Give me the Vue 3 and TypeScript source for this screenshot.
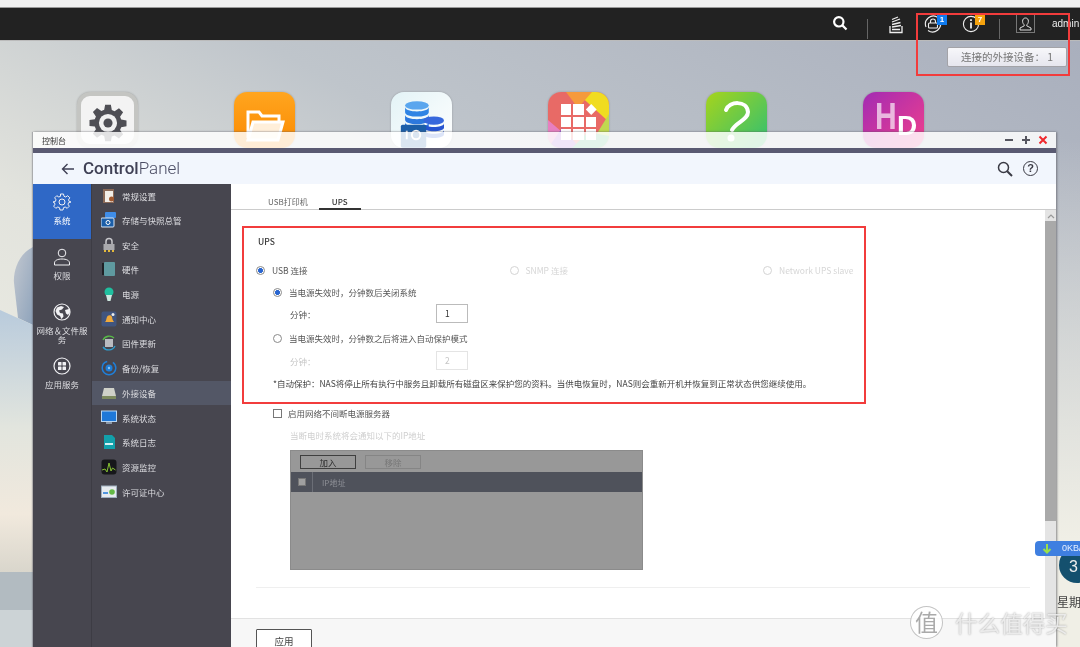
<template>
  <div class="desktop">
    <svg class="wallpaper" width="1080" height="607" viewBox="0 0 1080 607">
      <defs>
        <linearGradient id="sky" x1="0" y1="1" x2="1" y2="0">
          <stop offset="0" stop-color="#f4f3e8" />
          <stop offset="0.38" stop-color="#e2e3dd" />
          <stop offset="0.62" stop-color="#bfc5cb" />
          <stop offset="1" stop-color="#a9afbd" />
        </linearGradient>
        <linearGradient id="hill" x1="0" y1="0" x2="0" y2="1">
          <stop offset="0" stop-color="#b9cbdc" />
          <stop offset="0.45" stop-color="#e2e5de" />
          <stop offset="0.78" stop-color="#f1e9dd" />
          <stop offset="1" stop-color="#d9d6cc" />
        </linearGradient>
        <linearGradient id="rock" x1="0" y1="0" x2="1" y2="1">
          <stop offset="0" stop-color="#c3c8d0" />
          <stop offset="1" stop-color="#8ea3bb" />
        </linearGradient>
        <linearGradient id="rightFade" x1="0" y1="0" x2="0" y2="1">
          <stop offset="0" stop-color="#f0efe6" stop-opacity="0" />
          <stop offset="1" stop-color="#f0efe6" />
        </linearGradient>
      </defs>
      <rect width="1080" height="607" fill="url(#sky)" />
      <rect x="1056" y="100" width="24" height="400" fill="url(#rightFade)" />
      <rect x="1056" y="500" width="24" height="107" fill="#f0efe6" />
      <path d="M33 207 C18 214 13 232 14 243 L18 278 L33 285 Z" fill="url(#rock)" />
      <path d="M0 270 L33 285 V532 H0 Z" fill="url(#hill)" />
      <rect y="532" width="33" height="38" fill="#b2bbc1" />
      <rect y="570" width="33" height="37" fill="#ccd3d6" />
    </svg>

    <div class="top-strip"></div>
    <header class="topbar">
      <svg class="tb-icon" width="16" height="16" viewBox="0 0 16 16" fill="none" stroke="#fff" stroke-width="2.2">
        <circle cx="6.8" cy="6.8" r="4.7" /><path d="M10.4 10.4 14.500 14.500" />
      </svg>
      <span class="tb-sep"></span>
      <svg class="tb-icon stack" width="16" height="18" viewBox="0 0 16 18" fill="none" stroke="#eee" stroke-width="1.3">
        <path d="M2 10v6.500h12V10M4 13.500h8M4 11l9-1.500M4 8.500l8.500-2M4 6l8-3M4 3.500 10 1" />
      </svg>
      <span class="tb-wrap lock">
        <svg width="18" height="18" viewBox="0 0 18 18" fill="none" stroke="#eee" stroke-width="1.1">
          <path d="M2 12A8 8 0 0 1 14 2.500M16 6A8 8 0 0 1 4 15.500" />
          <rect x="4.500" y="8" width="9" height="5" rx="1" /><path d="M6.500 8V6.500a2.500 2.500 0 0 1 5 0V8" />
        </svg>
        <b class="badge blue">1</b>
      </span>
      <span class="tb-wrap info">
        <svg width="18" height="18" viewBox="0 0 18 18" fill="none" stroke="#eee" stroke-width="1.1">
          <circle cx="9" cy="9" r="7.600" /><path d="M9 7.500v6" stroke-width="1.800" /><path d="M9 4.200v1.800" stroke-width="1.800" />
        </svg>
        <b class="badge orange">7</b>
      </span>
      <span class="tb-sep second"></span>
      <span class="user-box">
        <svg width="13" height="14" viewBox="0 0 13 14" fill="none" stroke="#ddd" stroke-width="1">
          <path d="M6.500 1C4.600 1 3.600 2.400 3.600 4.200c0 1.600.7 2.900 1.600 3.600v1.100L1 11v2h11v-2L7.800 8.900V7.800c.9-.7 1.600-2 1.600-3.600C9.400 2.400 8.400 1 6.500 1Z" />
        </svg>
      </span>
      <span class="admin">admin</span>
    </header>

    <button class="device-pill">连接的外接设备： 1</button>

    <div class="app-icon gear" style="left: 77px">
      <svg width="38" height="38" viewBox="-1 -1 46 46">
        <path fill="#4f4f55" d="M18.500 0h7l1.100 6.400 3.400 1.400 5.300-3.700 5 5-3.700 5.300 1.400 3.400 6.400 1.100v7l-6.400 1.100-1.400 3.400 3.700 5.300-5 5-5.300-3.700-3.400 1.400L25.500 44h-7l-1.100-6.400-3.400-1.400-5.300 3.700-5-5 3.700-5.300-1.400-3.400L-.4 25.500v-7L6 17.400l1.400-3.400L3.700 8.700l5-5 5.300 3.700 3.400-1.400Z" />
        <circle cx="22" cy="22" r="11" fill="#f1f1f1" /><circle cx="22" cy="22" r="5.500" fill="#4f4f55" />
      </svg>
    </div>
    <div class="app-icon folder" style="left: 234px">
      <svg width="40" height="36" viewBox="0 0 40 36" fill="none" stroke="#fff" stroke-width="3">
        <path d="M3 30V4h11l3 4h17v5" /><path d="M8 14h30l-5 18H3Z" fill="#fff" fill-opacity=".85" />
      </svg>
    </div>
    <div class="app-icon snap" style="left: 391px">
      <svg width="44" height="48" viewBox="0 0 52 56">
        <ellipse cx="20" cy="6" rx="14" ry="5" fill="#5aa6ee" />
        <path d="M6 8c0 7 28 7 28 0v6c0 7-28 7-28 0Z" fill="#2f84e4" />
        <path d="M6 17c0 7 28 7 28 0v6c0 7-28 7-28 0Z" fill="#2c78dd" />
        <path d="M6 26c0 7 28 7 28 0v6H6Z" fill="#2c6fdb" />
        <ellipse cx="40" cy="24" rx="12" ry="5" fill="#3768dc" />
        <path d="M28 27c0 6 24 6 24 0v5c0 6-24 6-24 0Z" fill="#2654d0" />
        <path d="M28 35c0 6 24 6 24 0v5c0 6-24 6-24 0Z" fill="#2a5ad4" />
        <rect x="1" y="29" width="30" height="27" rx="2" fill="#1b5ea8" />
        <circle cx="19" cy="41" r="5" fill="none" stroke="#fff" stroke-width="2.200" /><path d="M8 36v10" stroke="#fff" stroke-width="2.200" />
      </svg>
    </div>
    <div class="app-icon store" style="left: 548px">
      <svg class="store-bg" width="61" height="56" viewBox="0 0 61 56">
        <rect width="61" height="56" fill="#e86a66" />
        <path d="M28 0H61V30Z" fill="#f0dc20" />
        <path d="M18 0H44L30 16Z" fill="#f59a3c" />
        <path d="M0 28 14 40 0 56Z" fill="#e77fc0" />
        <path d="M0 56 14 36 32 56Z" fill="#a060d0" />
        <path d="M61 22V56H40Z" fill="#c0d850" />
        <path d="M61 44V56H24L40 40Z" fill="#50b880" />
      </svg>
      <div class="store-grid"><i v-for="n in 9" :key="n" :class="{ diamond: n === 3 }"></i></div>
    </div>
    <div class="app-icon helpapp" style="left: 706px">
      <svg width="61" height="56" viewBox="0 0 61 56" fill="none" stroke="#fff" stroke-width="4" stroke-linecap="round">
        <path d="M20 18C23 9 41 8 42 20C42 28 30 30 26 38" />
        <circle cx="25" cy="46" r="3.500" fill="#fff" stroke="none" />
      </svg>
    </div>
    <div class="app-icon hd" style="left: 863px">
      <span class="h">H</span><span class="d">D</span>
    </div>

    <section class="window">
      <div class="titlebar">
        <span class="title">控制台</span>
        <span class="win-ctrl">
          <svg width="10" height="10" viewBox="0 0 10 10"><path d="M1 5h8" stroke="#55555f" stroke-width="2" /></svg>
          <svg width="10" height="10" viewBox="0 0 10 10"><path d="M1 5h8M5 1v8" stroke="#55555f" stroke-width="2" /></svg>
          <svg width="10" height="10" viewBox="0 0 10 10"><path d="M1.500 1.500l7 7M8.500 1.500l-7 7" stroke="#f0282d" stroke-width="2" /></svg>
        </span>
      </div>
      <div class="stripe"></div>
      <div class="app-header">
        <svg class="back" width="14" height="12" viewBox="0 0 14 12" fill="none" stroke="#3f4055" stroke-width="1.400">
          <path d="M13 6H1.500M6.500 1 1.500 6l5 5" />
        </svg>
        <span class="brand"><b>Control</b>Panel</span>
        <svg class="hd-search" width="16" height="16" viewBox="0 0 16 16" fill="none" stroke="#3a3a44" stroke-width="1.500">
          <circle cx="6.500" cy="6.500" r="5" /><path d="M10.200 10.200 15 15" stroke-width="2" />
        </svg>
        <span class="hd-help">?</span>
      </div>

      <div class="body">
        <nav class="nav-main">
          <div v-for="item in mainNav" :key="item.label" class="main-item" :class="{ active: item.active }">
            <svg width="18" height="18" viewBox="0 0 18 18" fill="none" stroke="#f1f1f4" stroke-width="1">
              <g v-if="item.icon === 'gear'">
                <path d="M7.500 1h3l.5 2.300 1.700.7 2-1.300 2.100 2.100-1.300 2 .7 1.700L18 9l-2.300.5-.7 1.700 1.300 2-2.100 2.100-2-1.300-1.700.7-.5 2.300h-3l-.5-2.300-1.700-.7-2 1.300-2.100-2.100 1.300-2-.7-1.700L0 9l2.300-.5.7-1.700-1.300-2 2.100-2.100 2 1.300 1.700-.7Z" />
                <circle cx="9" cy="9" r="3" />
              </g>
              <g v-else-if="item.icon === 'user'">
                <circle cx="9" cy="5" r="3.800" />
                <path d="M1.500 17v-2c0-2.500 3-4 7.500-4s7.500 1.500 7.500 4v2Z" />
              </g>
              <g v-else-if="item.icon === 'globe'">
                <circle cx="9" cy="9" r="8" stroke-width="1.200" />
                <path d="M4 4.500l4-1.500 3 1-2 2.500-3 1 1 2.500 3 .5.5 3-2 2.500-1.500-3-3-1.500-1.500-3.500ZM12 7l4-1 1 3-2 3-2-1.500Z" fill="#f1f1f4" stroke="none" />
              </g>
              <g v-else>
                <circle cx="9" cy="9" r="8" stroke-width="1.200" />
                <rect x="5" y="5" width="3.500" height="3.500" rx=".6" fill="#f1f1f4" stroke="none" />
                <rect x="9.500" y="5" width="3.500" height="3.500" rx=".6" fill="#f1f1f4" stroke="none" />
                <rect x="5" y="9.500" width="3.500" height="3.500" rx=".6" fill="#f1f1f4" stroke="none" />
                <rect x="9.500" y="9.500" width="3.500" height="3.500" rx=".6" fill="#f1f1f4" stroke="none" />
              </g>
            </svg>
            <span>{{ item.label }}</span>
          </div>
        </nav>

        <nav class="nav-sub">
          <div v-for="item in subNav" :key="item.label" class="sub-item" :class="{ active: item.active }">
            <span class="sub-icon" v-html="item.svg"></span>
            <span>{{ item.label }}</span>
          </div>
        </nav>

        <main class="content">
          <div class="tabs">
            <span class="tab">USB打印机</span>
            <span class="tab on">UPS</span>
          </div>

          <div class="scroll-area">
            <div class="form">
              <h3>UPS</h3>
              <div class="conn-row">
                <label class="radio-line"><i class="radio checked"></i>USB 连接</label>
                <label class="radio-line off"><i class="radio"></i>SNMP 连接</label>
                <label class="radio-line off"><i class="radio"></i>Network UPS slave</label>
              </div>

              <label class="radio-line sub first"><i class="radio checked"></i>当电源失效时，分钟数后关闭系统</label>
              <div class="minute-row">
                <span>分钟：</span>
                <span class="num-input">1</span>
              </div>
              <label class="radio-line sub"><i class="radio"></i>当电源失效时，分钟数之后将进入自动保护模式</label>
              <div class="minute-row off">
                <span>分钟：</span>
                <span class="num-input">2</span>
              </div>
              <p class="note">*自动保护：NAS将停止所有执行中服务且卸载所有磁盘区来保护您的资料。当供电恢复时，NAS则会重新开机并恢复到正常状态供您继续使用。</p>

              <label class="check-line"><i class="check"></i>启用网络不间断电源服务器</label>
              <p class="hint">当断电时系统将会通知以下的IP地址</p>

              <div class="ip-table">
                <div class="ip-tools">
                  <span class="ip-btn">加入</span>
                  <span class="ip-btn dim">移除</span>
                </div>
                <div class="ip-head">
                  <span class="ip-check"><i></i></span>
                  <span>IP地址</span>
                </div>
              </div>

              <div class="divider"></div>
            </div>
            <div class="scrollbar">
              <svg width="8" height="6" viewBox="0 0 8 6" fill="none" stroke="#999" stroke-width="1.200"><path d="M1 5l3-3 3 3" /></svg>
              <span class="thumb"></span>
            </div>
          </div>

          <footer class="footer">
            <button class="apply">应用</button>
          </footer>
        </main>
      </div>
    </section>

    <div class="widget-clock"><span>3</span></div>
    <div class="net-badge">
      <svg width="10" height="10" viewBox="0 0 10 10" fill="none" stroke="#9be04a" stroke-width="2"><path d="M5 0v8M1.500 5 5 8.500 8.500 5" /></svg>
      <span>0KB/s</span>
    </div>
    <div class="weekday">星期</div>

    <div class="mark box-a"></div>
    <div class="mark box-b"></div>

    <div class="watermark">
      <span class="wm-circle">值</span>
      <span class="wm-text">什么值得买</span>
    </div>
  </div>
</template>

<script setup lang="ts">
interface MainItem {
  label: string;
  icon: string;
  active?: boolean;
}

interface SubItem {
  label: string;
  svg: string;
  active?: boolean;
}

const wrap = (inner: string) =>
  `<svg width="16" height="16" viewBox="0 0 16 16">${inner}</svg>`;

const mainNav: MainItem[] = [
  { label: "系统", icon: "gear", active: true },
  { label: "权限", icon: "user" },
  { label: "网络＆文件服务", icon: "globe" },
  { label: "应用服务", icon: "apps" },
];

const subNav: SubItem[] = [
  {
    label: "常规设置",
    svg: wrap('<rect x="2" y="1" width="11" height="14" fill="#8b6a58"/><rect x="4" y="3" width="8" height="11" fill="#f2eee8"/><circle cx="10.500" cy="11" r="2.500" fill="#a25a30"/>'),
  },
  {
    label: "存储与快照总管",
    svg: wrap('<rect x="4" y="0" width="11" height="6" rx="1" fill="#3f8de8"/><rect x="0" y="6" width="13" height="9" rx="1" fill="#1b5ea8" stroke="#dbe8f7"/><circle cx="7" cy="10.500" r="2" fill="none" stroke="#fff"/>'),
  },
  {
    label: "安全",
    svg: wrap('<path d="M5 7V4.500a3 3 0 0 1 6 0V7" fill="none" stroke="#c8c8cc" stroke-width="1.500"/><rect x="2.500" y="7" width="11" height="6" fill="#a9a9ad"/><path d="M3 14h2M7 14h2M11 14h2" stroke="#e3b93c" stroke-width="2"/>'),
  },
  {
    label: "硬件",
    svg: wrap('<rect x="1" y="2" width="3" height="12" fill="#1f2025"/><rect x="3" y="1" width="11" height="14" rx="1" fill="#5f9aa0"/>'),
  },
  {
    label: "电源",
    svg: wrap('<circle cx="8" cy="6" r="4.500" fill="#1fbf9f"/><path d="M5 9h6l-1.500 6h-3Z" fill="#cfe8e0"/>'),
  },
  {
    label: "通知中心",
    svg: wrap('<rect x="0.500" y="0.500" width="15" height="15" rx="2" fill="#41557f"/><path d="M4 11c1.500-1 1-4 2.500-6 1.500-1.500 4-1 4.500 1 .5 2 .5 3.500 2 5Z" fill="#f0a93a"/><circle cx="12" cy="3.500" r="1.500" fill="#eee"/>'),
  },
  {
    label: "固件更新",
    svg: wrap('<path d="M2 5a7 7 0 0 1 11-2" fill="none" stroke="#58b947" stroke-width="1.300"/><path d="M14 11a7 7 0 0 1-12 1" fill="none" stroke="#2f9fd0" stroke-width="1.300"/><rect x="4" y="4" width="8" height="8" fill="#b9bbc0"/>'),
  },
  {
    label: "备份/恢复",
    svg: wrap('<circle cx="8" cy="8" r="6.800" fill="none" stroke="#1f7fd9" stroke-width="1.500" stroke-dasharray="30 6"/><circle cx="8" cy="8" r="3.500" fill="#1f7fd9"/><circle cx="8" cy="8" r="1.200" fill="#8fc4f2"/>'),
  },
  {
    label: "外接设备",
    svg: wrap('<path d="M3 3h10l2 8H1Z" fill="#cfd1c9"/><rect x="1" y="11" width="14" height="3" fill="#7d8a5f"/>'),
    active: true,
  },
  {
    label: "系统状态",
    svg: wrap('<rect x="0.500" y="1" width="15" height="10.500" fill="#1f78d8" stroke="#b9d6f2"/><rect x="5" y="12" width="6" height="2" fill="#8d99a8"/>'),
  },
  {
    label: "系统日志",
    svg: wrap('<path d="M3 1h8l3 3v11H3Z" fill="#12a0aa"/><rect x="4" y="9" width="8" height="2" fill="#d5f2f4"/>'),
  },
  {
    label: "资源监控",
    svg: wrap('<rect x="0.500" y="0.500" width="15" height="15" rx="3" fill="#16171a"/><path d="M1 11l3-1 2 3 2-9 2 8 1.500-3 3 2" fill="none" stroke="#86c232"/>'),
  },
  {
    label: "许可证中心",
    svg: wrap('<rect x="0.500" y="2" width="15" height="11.500" fill="#e6ebef" stroke="#9fb0c0"/><path d="M2 9h5" stroke="#1f78d8" stroke-width="1.500"/><circle cx="11" cy="8" r="2.800" fill="#63b946"/>'),
  },
];
</script>

<style>
html,
body {
  margin: 0;
  overflow: hidden;
}
</style>

<style scoped>
.desktop {
  position: relative;
  width: 1080px;
  height: 647px;
  overflow: hidden;
  background: #fff;
  font-family: "Noto Sans CJK SC", "Liberation Sans", sans-serif;
  font-size: 8.5px;
  color: #555;
  filter: blur(0.35px);
}

.wallpaper {
  position: absolute;
  left: 0;
  top: 40px;
}

.top-strip {
  height: 7px;
  background: #f1f1f1;
  border-bottom: 1px solid #9a9a9a;
}

.topbar {
  position: relative;
  height: 33px;
  background: #222;
  border-bottom: 1px solid #bbb;
  box-sizing: border-box;
}

.topbar > * {
  position: absolute;
}

.tb-icon {
  left: 832px;
  top: 7px;
}

.tb-icon.stack {
  left: 888px;
  top: 8px;
}

.tb-sep {
  left: 867px;
  top: 11px;
  width: 1px;
  height: 20px;
  background: #666;
}

.tb-sep.second {
  left: 999px;
}

.tb-wrap {
  top: 7px;
  width: 24px;
  height: 20px;
}

.tb-wrap svg {
  display: block;
}

.tb-wrap.lock {
  left: 924px;
}

.tb-wrap.info {
  left: 962px;
}

.badge {
  position: absolute;
  left: 13px;
  top: 0;
  width: 10px;
  height: 10px;
  color: #fff;
  font: 700 8px/10px "Liberation Sans", sans-serif;
  text-align: center;
}

.badge.blue {
  background: #0f7bf0;
}

.badge.orange {
  background: #f5a20d;
}

.user-box {
  left: 1016px;
  top: 6px;
  width: 19px;
  height: 19px;
  box-sizing: border-box;
  border: 1px solid #777;
  display: flex;
  align-items: center;
  justify-content: center;
}

.admin {
  left: 1052px;
  top: 9px;
  color: #eee;
  font: 10px/14px "Liberation Sans", sans-serif;
  white-space: nowrap;
}

.device-pill {
  position: absolute;
  left: 947px;
  top: 47px;
  width: 120px;
  height: 20px;
  padding: 0;
  border: 1px solid #a3a3a8;
  border-radius: 2px;
  background: linear-gradient(#f7f7fa, #e6e6ee);
  color: #777;
  font: 10.5px/18px "Noto Sans CJK SC", sans-serif;
}

.app-icon {
  position: absolute;
  top: 92px;
  width: 61px;
  height: 56px;
  border-radius: 13px;
  box-sizing: border-box;
  display: flex;
  justify-content: center;
  box-shadow: 0 0 2px rgba(0, 0, 0, 0.25);
  overflow: hidden;
}

.gear {
  background: #f3f3f3;
  border: 4px solid #c4c5c2;
  padding-top: 8px;
}

.folder {
  background: linear-gradient(#ffa51f, #fb8a00);
  padding-top: 16px;
}

.snap {
  background: linear-gradient(135deg, #e3f3f6, #fff);
  padding-top: 8px;
}

.store-bg {
  position: absolute;
  left: 0;
  top: 0;
}

.store-grid {
  position: relative;
  margin-top: 12px;
  display: grid;
  grid-template-columns: repeat(3, 10.5px);
  grid-auto-rows: 10.5px;
  gap: 2px;
}

.store-grid i {
  background: #fff;
}

.store-grid i.diamond {
  transform: rotate(45deg) scale(0.7);
}

.helpapp {
  background: linear-gradient(135deg, #a6d41c, #2fbf74);
}

.hd {
  background: linear-gradient(135deg, #a22bb3, #f2408c);
  color: #fff;
  font: 700 30px/1 "Liberation Sans", sans-serif;
}

.hd .h {
  position: absolute;
  left: 12px;
  top: 7px;
  opacity: 0.65;
  transform: scaleY(1.2);
  transform-origin: top;
}

.hd .d {
  position: absolute;
  left: 34px;
  top: 20px;
  font-size: 28px;
}

.window {
  position: absolute;
  left: 33px;
  top: 132px;
  width: 1023px;
  height: 515px;
  display: flex;
  flex-direction: column;
  box-shadow: 1px 0 2px rgba(90, 90, 100, 0.7), -1px 0 1px rgba(90, 90, 100, 0.35);
}

.titlebar {
  height: 16px;
  display: flex;
  align-items: center;
  justify-content: space-between;
  padding: 0 8px 0 9px;
  background: rgba(255, 255, 255, 0.84);
}

.title {
  font-size: 8px;
  color: #333;
}

.win-ctrl {
  display: flex;
  gap: 7px;
}

.win-ctrl svg {
  display: block;
}

.stripe {
  height: 5px;
  background: #5a5a72;
}

.app-header {
  height: 31px;
  display: flex;
  align-items: center;
  padding: 0 18px 0 28px;
  background: #f2f6fd;
}

.back {
  margin-right: 8px;
}

.brand {
  flex: 1;
  font: 300 17px/1 Roboto, "Liberation Sans", sans-serif;
  color: #4b4c63;
}

.brand b {
  font-weight: 500;
  color: #3f4055;
}

.hd-search {
  margin-right: 10px;
}

.hd-help {
  width: 13px;
  height: 13px;
  border: 1.5px solid #3a3a44;
  border-radius: 50%;
  color: #3a3a44;
  font: 700 11px/13px "Liberation Sans", sans-serif;
  text-align: center;
}

.body {
  flex: 1;
  display: flex;
  min-height: 0;
}

.nav-main {
  width: 58px;
  flex: none;
  background: #47464f;
}

.main-item {
  min-height: 54.5px;
  box-sizing: border-box;
  display: flex;
  flex-direction: column;
  align-items: center;
  padding: 9px 3px 0;
  gap: 5px;
  color: #dcdce0;
  font-size: 8.5px;
  line-height: 9px;
  text-align: center;
}

.main-item.active {
  height: 55px;
  background: #2f68c6;
  color: #fff;
}

.main-item svg {
  flex: none;
}

.nav-sub {
  width: 140px;
  flex: none;
  background: #47464f;
  border-left: 1px solid #3d3c44;
  box-sizing: border-box;
}

.sub-item {
  height: 24.7px;
  display: flex;
  align-items: center;
  gap: 5px;
  padding-left: 9px;
  color: #dcdce0;
}

.sub-item:first-child {
  height: 23.7px;
}

.sub-item.active {
  background: #535766;
}

.sub-icon {
  width: 16px;
  height: 16px;
  display: block;
  line-height: 0;
}

.content {
  flex: 1;
  min-width: 0;
  display: flex;
  flex-direction: column;
  background: #fff;
}

.tabs {
  height: 26px;
  flex: none;
  box-sizing: border-box;
  border-bottom: 1px solid #ccc;
  display: flex;
  align-items: flex-end;
  padding-left: 22px;
}

.tab {
  height: 17px;
  line-height: 17px;
  padding: 0 15px;
  color: #666;
  font-size: 8px;
  margin-bottom: -1px;
  box-sizing: border-box;
}

.tab.on {
  width: 42px;
  padding: 0;
  text-align: center;
  color: #333;
  font-weight: 500;
  border-bottom: 2px solid #333;
  margin-left: -4px;
}

.scroll-area {
  flex: 1;
  min-height: 0;
  display: flex;
  overflow: hidden;
}

.form {
  flex: 1;
  min-width: 0;
  padding: 25px 0 0 26px;
  box-sizing: border-box;
}

h3 {
  margin: 0 0 0 1px;
  font-size: 8.5px;
  font-weight: 500;
  line-height: 12px;
  color: #333;
}

.conn-row {
  display: flex;
  margin-top: 17px;
}

.conn-row .radio-line {
  width: 253.5px;
}

.radio-line {
  display: flex;
  align-items: center;
  gap: 7px;
  height: 12px;
  line-height: 12px;
  color: #555;
  white-space: nowrap;
}

.radio-line.off {
  color: #d6d6d6;
}

.radio-line.sub {
  margin-left: 17px;
}

.radio-line.sub.first {
  margin-top: 10px;
}

.radio {
  width: 9px;
  height: 9px;
  margin-left: -1px;
  box-sizing: border-box;
  border: 1px solid #8a8a8a;
  border-radius: 50%;
  background: #fff;
  flex: none;
}

.off .radio {
  border-color: #d4d4d4;
}

.radio.checked {
  background: radial-gradient(circle, #2a66d0 0 2.2px, #fff 2.7px);
}

.minute-row {
  display: flex;
  align-items: center;
  height: 19px;
  margin: 6px 0 9px 33px;
}

.minute-row span:first-child {
  width: 146px;
}

.minute-row.off {
  color: #c6c6c6;
  margin: 7px 0 7px 33px;
}

.num-input {
  width: 32px;
  height: 19px;
  box-sizing: border-box;
  border: 1px solid #bbb;
  padding-left: 8px;
  line-height: 17px;
  color: #333;
}

.off .num-input {
  border-color: #e4e4e4;
  color: #c6c6c6;
}

.note {
  margin: 0 0 0 16px;
  height: 12px;
  line-height: 12px;
  color: #444;
  white-space: nowrap;
}

.check-line {
  display: flex;
  align-items: center;
  gap: 6px;
  margin: 18px 0 0 16px;
  height: 12px;
  line-height: 12px;
  color: #555;
}

.check {
  width: 9px;
  height: 9px;
  border: 1px solid #777;
  box-sizing: border-box;
  background: #fff;
}

.hint {
  margin: 10px 0 0 33px;
  height: 12px;
  line-height: 12px;
  color: #cfcfcf;
}

.ip-table {
  width: 353px;
  height: 120px;
  margin: 9px 0 0 33px;
  box-sizing: border-box;
  background: #989898;
  border: 1px solid #8b8b8b;
}

.ip-tools {
  height: 21px;
  display: flex;
  align-items: center;
  gap: 9px;
  padding-left: 9px;
}

.ip-btn {
  width: 56px;
  height: 14px;
  box-sizing: border-box;
  border: 1px solid #3f3f3f;
  text-align: center;
  line-height: 12px;
  color: #2d2d2d;
}

.ip-btn.dim {
  border-color: #858585;
  color: #777;
}

.ip-head {
  height: 20px;
  background: #4f525b;
  display: flex;
  align-items: center;
  color: #8e9096;
  font-size: 8px;
}

.ip-check {
  width: 22px;
  height: 100%;
  margin-right: 9px;
  display: flex;
  align-items: center;
  justify-content: center;
  border-right: 1px solid #6b6e76;
  box-sizing: border-box;
}

.ip-check i {
  width: 8px;
  height: 8px;
  background: #a0a0a0;
  border: 1px solid #777;
  box-sizing: border-box;
}

.divider {
  width: 774px;
  margin: 17px 0 0 -1px;
  border-top: 1px solid #efefef;
}

.scrollbar {
  width: 11px;
  flex: none;
  background: #e4e4e4;
  display: flex;
  flex-direction: column;
  align-items: center;
  padding-top: 3px;
  box-sizing: border-box;
}

.thumb {
  width: 100%;
  height: 300px;
  margin-top: 2px;
  background: #a9a9a9;
}

.footer {
  height: 29px;
  flex: none;
  box-sizing: border-box;
  border-top: 1px solid #e2e2e2;
  background: #f7f7f7;
  padding: 10px 0 0 25px;
}

.apply {
  display: block;
  width: 56px;
  height: 24px;
  padding: 0;
  border: 1px solid #555;
  border-radius: 1px;
  background: #fff;
  color: #444;
  font: 9.5px/18px "Noto Sans CJK SC", sans-serif;
  text-align: center;
}

.widget-clock {
  position: absolute;
  left: 1059px;
  top: 547px;
  width: 36px;
  height: 36px;
  border-radius: 50%;
  background: #14506e;
  color: #eee;
  font: 16px/40px "Liberation Sans", sans-serif;
}

.widget-clock span {
  margin-left: 10px;
}

.net-badge {
  position: absolute;
  left: 1035px;
  top: 541px;
  width: 60px;
  height: 15px;
  box-sizing: border-box;
  border-radius: 4px;
  background: #3f7fe0;
  display: flex;
  align-items: center;
  gap: 10px;
  padding-left: 7px;
  color: #e6efff;
  font: 9px/15px "Liberation Sans", sans-serif;
}

.weekday {
  position: absolute;
  left: 1057px;
  top: 594px;
  font-size: 12px;
  line-height: 16px;
  color: #444;
  width: 23px;
  overflow: hidden;
  white-space: nowrap;
}

.mark {
  position: absolute;
  box-sizing: border-box;
  border: 2px solid #f23c3c;
  pointer-events: none;
}

.box-a {
  left: 916px;
  top: 13px;
  width: 154px;
  height: 63px;
}

.box-b {
  left: 242px;
  top: 226px;
  width: 624px;
  height: 178px;
}

.watermark {
  position: absolute;
  left: 910px;
  top: 606px;
  display: flex;
  align-items: center;
  gap: 12px;
}

.wm-circle {
  width: 33px;
  height: 33px;
  box-sizing: border-box;
  border-radius: 50%;
  background: rgba(255, 255, 255, 0.85);
  border: 1px solid rgba(170, 170, 170, 0.7);
  color: #aaa;
  font-size: 23px;
  line-height: 29px;
  text-align: center;
}

.wm-text {
  font-size: 22.6px;
  line-height: 22px;
  color: rgba(240, 240, 240, 0.9);
  text-shadow: 0 0 2px rgba(0, 0, 0, 0.35);
}
</style>
